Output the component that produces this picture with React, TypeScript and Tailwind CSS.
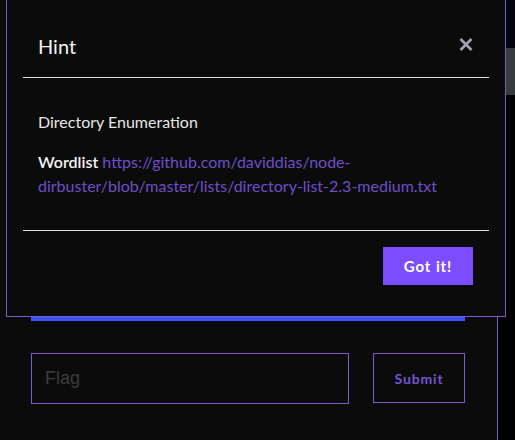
import type { ReactNode } from "react";

const PURPLE = "border-[#7b5cc4]";

function CloseIcon() {
  return (
    <svg width="14" height="13" viewBox="0 0 14 13" className="mt-[6px] shrink-0">
      <path d="M1.5 1 L12.5 12 M12.5 1 L1.5 12" stroke="#a3a3b1" strokeWidth="2.6" strokeLinecap="butt" />
    </svg>
  );
}

function HintModal({ children }: { children: ReactNode }) {
  return (
    <div className={`absolute left-[6px] top-[-1px] w-[500px] border ${PURPLE} bg-[#0b0b0b] px-4 font-['Lato',sans-serif]`}>
      <header className="flex items-start justify-between border-b border-[#dedede] pb-[17px] pl-[15px] pr-[16px] pt-[32px]">
        <h3 className="text-[20px] leading-[28px] text-[#f2f2f2]">Hint</h3>
        <CloseIcon />
      </header>
      <div className="px-[15px] py-[32px] text-[16px] leading-[24px] text-[#e6e6e6]">{children}</div>
      <footer className="flex justify-end border-t border-[#dedede] pb-[31px] pr-4 pt-[16px]">
        <button
          type="button"
          className="h-[38px] w-[90px] bg-[#7c4dff] text-[15px] font-bold tracking-[0.06em] text-white"
        >
          Got it!
        </button>
      </footer>
    </div>
  );
}

export default function App() {
  return (
    <div className="relative flex h-[440px] w-[515px] overflow-hidden bg-black">
      {/* challenge card behind the modal */}
      <div className={`flex h-full w-[498px] shrink-0 flex-col border-r ${PURPLE} bg-[#0b0b0b] pl-[31px] pr-[32px] pt-[317px]`}>
        <div className="h-[4px] w-full bg-[#3d50ff]" />
        <div className="mt-[32px] flex items-start gap-[24px]">
          <input
            placeholder="Flag"
            className={`h-[51px] w-[318px] border ${PURPLE} bg-transparent pl-[13px] font-['Liberation_Sans',Arial,sans-serif] text-[18px] text-white outline-none placeholder:text-[#3c3c3c]`}
          />
          <button
            type="button"
            className={`h-[50px] w-[92px] border ${PURPLE} bg-transparent font-['Lato',sans-serif] text-[14px] font-bold tracking-[0.06em] text-[#7454d2]`}
          >
            Submit
          </button>
        </div>
      </div>
      <div className="w-[8px] shrink-0" />
      <div className="flex w-[9px] shrink-0 flex-col">
        <div className="h-[48px] bg-[#05020f]" />
        <div className="h-[47px] bg-[#363c3c]" />
      </div>

      <HintModal>
        <p className="mb-4">Directory Enumeration</p>
        <p>
          <span className="font-semibold text-[#f4f4f4]">Wordlist</span>{" "}
          <a className="text-[#6c4fc8]" href="#">
            https://github.com/daviddias/node-dirbuster/blob/master/lists/directory-list-2.3-medium.txt
          </a>
        </p>
      </HintModal>
    </div>
  );
}
